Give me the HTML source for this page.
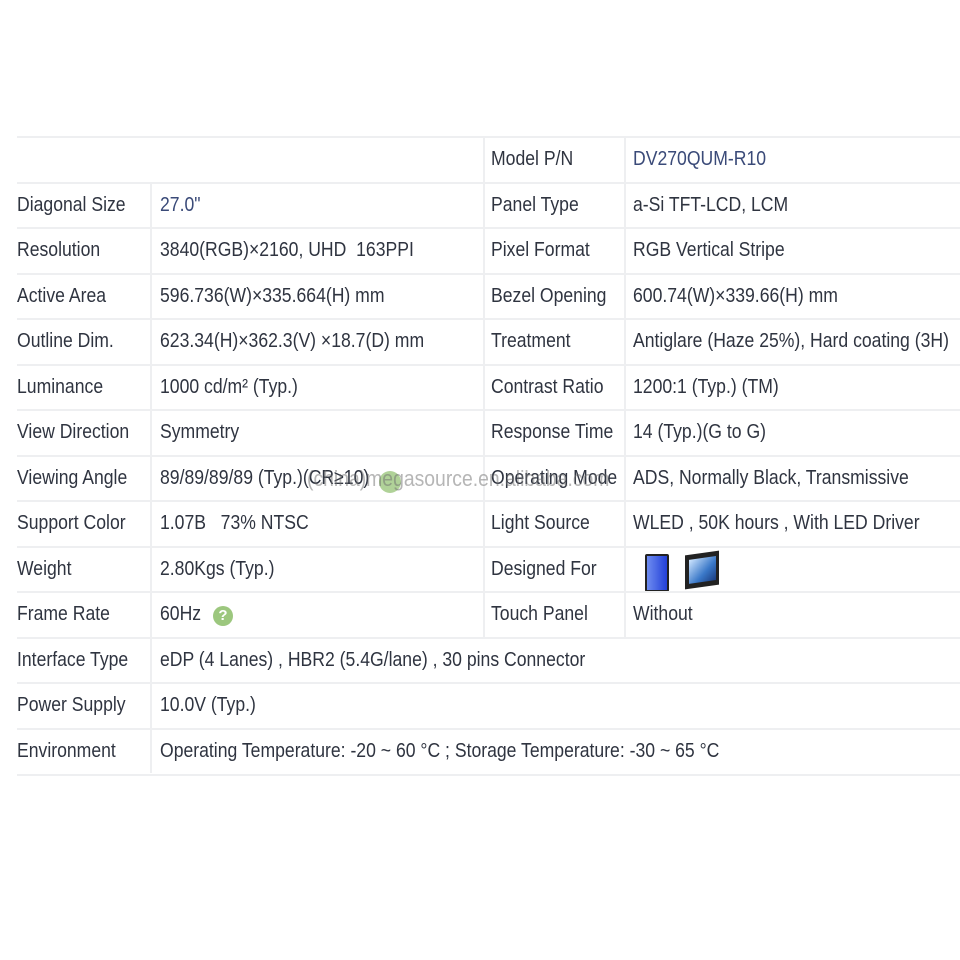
<!DOCTYPE html>
<html><head><meta charset="utf-8"><style>
body{margin:0;width:960px;height:960px;background:#fff;position:relative;overflow:hidden;font-family:"Liberation Sans",sans-serif;color:#2f3440}
.r{position:absolute;left:17px;width:943px;border-top:2px solid #eeeff1;height:44px}
.t{position:absolute;top:10px;font-size:20px;white-space:nowrap;transform:scaleX(.88);transform-origin:left;display:inline-block}
.v{position:absolute;top:137px;width:2px;background:#eeeff1}
.blue{color:#3a4a78}
</style></head><body>
<div class="v" style="left:150px;top:182px;height:591px"></div>
<div class="v" style="left:483px;height:500px"></div>
<div class="v" style="left:624px;height:500px"></div>

<div class="r" style="top:136px"><span class="t" style="left:474px">Model P/N</span><span class="t blue" style="left:616px">DV270QUM-R10</span></div>
<div class="r" style="top:182px"><span class="t">Diagonal Size</span><span class="t blue" style="left:143px">27.0"</span><span class="t" style="left:474px">Panel Type</span><span class="t" style="left:616px">a-Si TFT-LCD, LCM</span></div>
<div class="r" style="top:227px"><span class="t">Resolution</span><span class="t" style="left:143px">3840(RGB)×2160, UHD &nbsp;163PPI</span><span class="t" style="left:474px">Pixel Format</span><span class="t" style="left:616px">RGB Vertical Stripe</span></div>
<div class="r" style="top:273px"><span class="t">Active Area</span><span class="t" style="left:143px">596.736(W)×335.664(H) mm</span><span class="t" style="left:474px">Bezel Opening</span><span class="t" style="left:616px">600.74(W)×339.66(H) mm</span></div>
<div class="r" style="top:318px"><span class="t">Outline Dim.</span><span class="t" style="left:143px">623.34(H)×362.3(V) ×18.7(D) mm</span><span class="t" style="left:474px">Treatment</span><span class="t" style="left:616px">Antiglare (Haze 25%), Hard coating (3H)</span></div>
<div class="r" style="top:364px"><span class="t">Luminance</span><span class="t" style="left:143px">1000 cd/m² (Typ.)</span><span class="t" style="left:474px">Contrast Ratio</span><span class="t" style="left:616px">1200:1 (Typ.) (TM)</span></div>
<div class="r" style="top:409px"><span class="t">View Direction</span><span class="t" style="left:143px">Symmetry</span><span class="t" style="left:474px">Response Time</span><span class="t" style="left:616px">14 (Typ.)(G to G)</span></div>
<div class="r" style="top:455px"><span class="t">Viewing Angle</span><span class="t" style="left:143px">89/89/89/89 (Typ.)(CR≥10)</span><span class="t" style="left:474px">Operating Mode</span><span class="t" style="left:616px">ADS, Normally Black, Transmissive</span>
<span style="position:absolute;left:362px;top:14px;width:22px;height:22px;border-radius:50%;background:#9cc77e;opacity:.8"></span>
<span class="t" style="left:290px;top:9px;font-size:22px;color:rgba(110,110,110,.5)">(china)megasource.en.alibaba.com</span></div>
<div class="r" style="top:500px"><span class="t">Support Color</span><span class="t" style="left:143px">1.07B &nbsp;&nbsp;73% NTSC</span><span class="t" style="left:474px">Light Source</span><span class="t" style="left:616px">WLED , 50K hours , With LED Driver</span></div>
<div class="r" style="top:546px"><span class="t">Weight</span><span class="t" style="left:143px">2.80Kgs (Typ.)</span><span class="t" style="left:474px">Designed For</span>
<span style="position:absolute;left:628px;top:6px;width:20px;height:34px;border:2px solid #222;border-radius:2px;background:linear-gradient(90deg,#6e8cf0,#2240d8)"></span>
<span style="position:absolute;left:668px;top:5px;width:34px;height:34px;background:#222;transform:skewY(-8deg)"><span style="position:absolute;left:4px;top:5px;width:27px;height:24px;background:linear-gradient(135deg,#cfe6ff,#3a78c8 60%,#1a3c80)"></span></span></div>
<div class="r" style="top:591px"><span class="t">Frame Rate</span><span class="t" style="left:143px">60Hz</span>
<span style="position:absolute;left:196px;top:13px;width:20px;height:20px;border-radius:50%;background:#9cc77e;color:#fff;font-size:15px;font-weight:bold;text-align:center;line-height:20px">?</span>
<span class="t" style="left:474px">Touch Panel</span><span class="t" style="left:616px">Without</span></div>
<div class="r" style="top:637px"><span class="t">Interface Type</span><span class="t" style="left:143px">eDP (4 Lanes) , HBR2 (5.4G/lane) , 30 pins Connector</span></div>
<div class="r" style="top:682px"><span class="t">Power Supply</span><span class="t" style="left:143px">10.0V (Typ.)</span></div>
<div class="r" style="top:728px;border-bottom:2px solid #eeeff1"><span class="t">Environment</span><span class="t" style="left:143px">Operating Temperature: -20 ~ 60 °C ; Storage Temperature: -30 ~ 65 °C</span></div>
</body></html>
